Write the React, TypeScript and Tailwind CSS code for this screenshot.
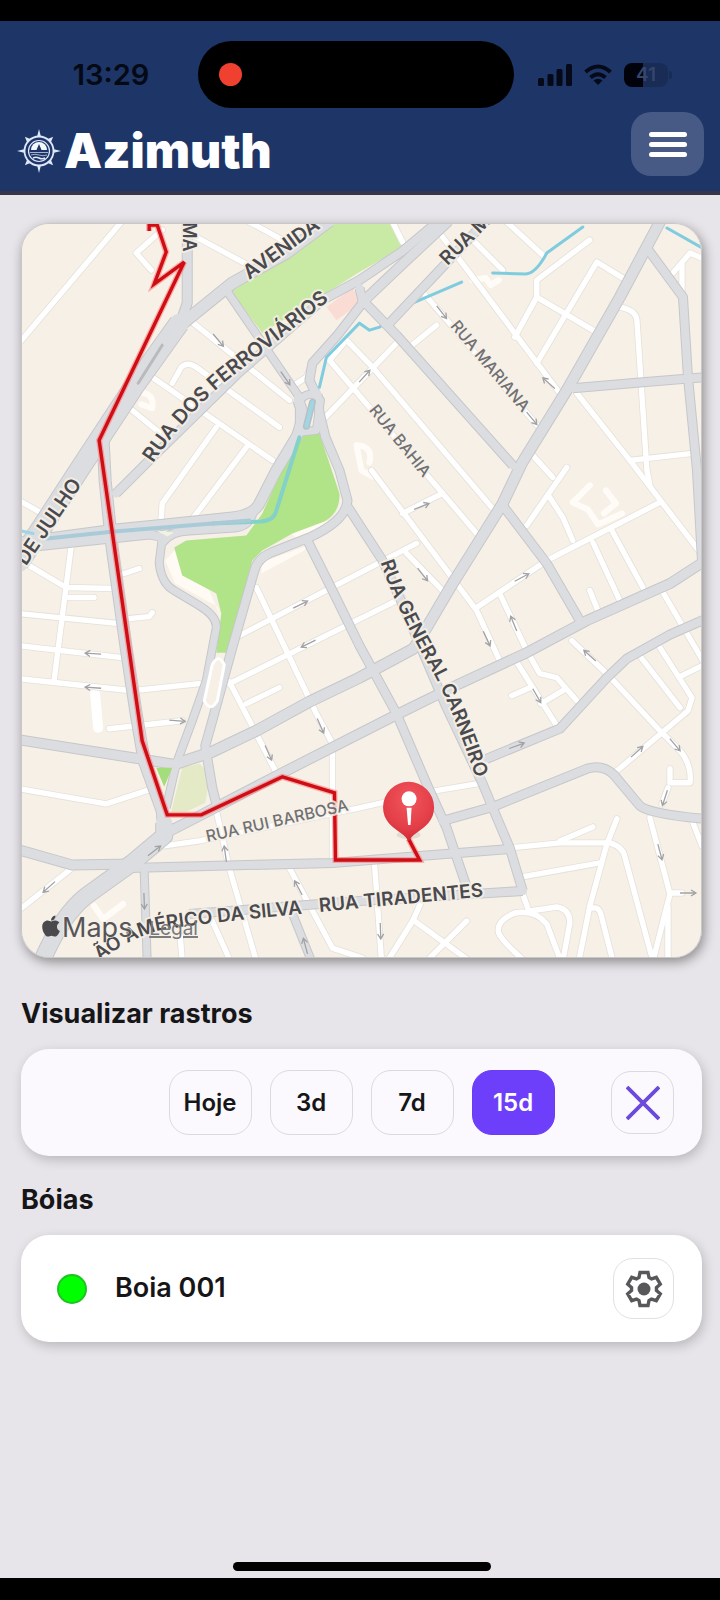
import React from "react";
import { FaApple } from "react-icons/fa";

const mainRoads: { d: string; w: number }[] = [
  { d: "M20 562L83 465L135 386L180 323", w: 19 },
  { d: "M180 326L233 283L287 253L330 221", w: 11 },
  { d: "M188 220L188 303L180 326", w: 9 },
  { d: "M227 290L300 397", w: 7 },
  { d: "M117 493L150 460L240 372L323 300L360 280L403 251L439 221", w: 8 },
  { d: "M363 302L403 264L449 221", w: 9 },
  { d: "M388 325L443 267L486 221", w: 8 },
  { d: "M360 288L363 300L397 335L513 465", w: 8 },
  { d: "M503 505L547 563L580 620", w: 8 },
  { d: "M661 220L620 297L567 390L522 463L503 503L453 583L427 627L414 648L360 677L310 701L257 730L213 751L177 763", w: 10 },
  { d: "M647 248L683 297L688 377L697 470L702 560", w: 8 },
  { d: "M573 388L643 382L704 377", w: 8 },
  { d: "M366 299L338 335L313 363L310 380L317 395", w: 8 },
  { d: "M299 400L304 415L298 435L277 470L259 505Q252 515 233 517L157 525L117 529L20 542", w: 10 },
  { d: "M318 394L320 412L326 437L340 470L348 500Q347 520 310 537L272 552Q258 558 255 570L233 647L213 720L206 745L213 787L217 803", w: 8 },
  { d: "M300 400Q312 388 321 400L317 430L300 432Z", w: 7 },
  { d: "M36 546L150 534L160 536M163 542Q172 530 190 530L235 527Q250 526 254 510", w: 8 },
  { d: "M163 538L160 562Q162 583 175 590L200 605Q218 616 217 627L207 680L193 720L177 763L167 807", w: 7 },
  { d: "M348 506L383 560L400 597L447 707L483 783L493 807L510 847L523 890", w: 8 },
  { d: "M308 540L333 590L360 645L397 713L427 783L447 827L467 886", w: 8 },
  { d: "M165 833L202 814L283 772L397 714L460 683L527 652L587 620L670 583L704 561", w: 9 },
  { d: "M704 619L670 634L627 658L607 677L560 728L487 758", w: 8 },
  { d: "M443 820L493 806L587 768Q603 763 614 774L640 805Q650 813 704 818", w: 8 },
  { d: "M130 867L333 862L420 855L510 848", w: 8 },
  { d: "M190 913L360 900L523 890", w: 8 },
  { d: "M104 440L106 480L113 547L127 647L137 713L145 760L163 810L165 833", w: 11 },
  { d: "M165 822L165 835L133 862L87 895Q62 915 43 960", w: 16 },
  { d: "M20 739L140 758L177 764", w: 9 },
  { d: "M20 849L73 864L133 863", w: 9 },
  { d: "M145 870L148 960", w: 7 },
  { d: "M290 905L312 960", w: 7 },
];

const streets = [
  "M20 343L123 221", "M163 230L137 253L152 270", "M197 237L247 264", "M250 222L287 242",
  "M193 322L290 400", "M153 377L273 460", "M173 383L182 367Q188 361 197 367L280 427",
  "M133 410L160 432", "M217 427L163 503L162 518", "M247 447L195 516", "M313 362L307 377L293 386",
  "M330 360L477 533", "M330 360L347 340L373 367L493 508", "M323 420L397 343", "M410 347L437 325",
  "M423 292L540 428", "M440 233L560 393", "M470 237L503 270", "M507 222L543 255",
  "M590 240L537 280L537 297L593 330", "M537 297L515 337", "M623 278L597 262L537 363",
  "M393 222L403 242", "M620 307Q636 310 637 320L647 470L650 485", "M577 393L630 460L704 557",
  "M630 460L693 453", "M673 273L690 253L704 259", "M682 265L682 293", "M533 455L553 477",
  "M567 467L527 525", "M550 497L563 517L573 540", "M660 502L547 560L477 607", "M593 542L620 600",
  "M612 530L643 587", "M590 590L598 610", "M662 590L704 662", "M372 470L457 583L477 610L500 660",
  "M403 513L443 493", "M240 635L417 543", "M230 683L403 597", "M407 553L443 590",
  "M500 593L527 650L540 673L557 677L577 700", "M518 663L557 725", "M512 695L530 687",
  "M541 703L563 690", "M572 640L607 673L660 730L680 750Q692 764 690 782L670 782L670 768",
  "M668 787L662 803", "M642 658L680 707", "M660 647L692 697L688 710L617 770", "M682 675L704 664",
  "M165 845L200 840L360 807L435 790L483 782", "M510 847L560 842L610 842Q623 846 625 856L653 960",
  "M560 840L593 826", "M617 818L607 843L590 905L579 960", "M522 876L600 862", "M523 893L528 907",
  "M561 960L547 923Q535 908 515 912Q496 920 499 932Q502 940 525 960",
  "M530 910L557 906Q570 908 570 922L563 960", "M593 907Q599 906 601 913L613 960",
  "M650 817L670 893L653 960", "M668 905L668 960", "M670 892L682 892", "M693 822L702 845",
  "M375 863L382 960", "M423 898L413 920L388 960", "M415 920L470 960", "M467 920L427 960",
  "M20 788L107 803L153 788", "M110 728L183 720", "M72 868L20 909", "M140 863L160 847",
  "M230 681L277 772", "M257 587L317 713L333 743L333 860", "M217 810L230 867L257 960",
  "M290 867L333 947L363 957", "M213 920L231 960", "M181 935L183 960", "M247 703L280 687",
  "M72 547L55 680", "M20 559L67 587L115 588", "M20 613L120 623", "M20 645L123 657",
  "M20 678L133 690L200 683", "M20 500L43 513", "M125 573L140 568", "M130 618L150 616L153 612",
  "M70 597L95 597",
];

const paleShapes =
  "M590 485L573 502L588 509L598 524L622 513M606 490L616 503L604 513M140 392Q156 393 153 408L142 404M473 280L486 278L491 285L499 280M357 445L362 470L373 476M357 445Q374 446 370 462M95 905L104 918L124 903";

const arrows: [number, number, number][] = [
  [219, 340, 50], [286, 378, 55], [442, 312, 52], [549, 383, 222], [532, 418, 50], [365, 376, -48],
  [422, 506, -22], [423, 574, 52], [522, 577, -28], [514, 623, 248], [487, 638, 65], [590, 655, 222],
  [537, 695, 60], [301, 604, -26], [309, 643, 154], [94, 653, 184], [94, 687, 184], [178, 720, 4],
  [269, 752, 66], [321, 725, 66], [517, 745, -20], [637, 751, -42], [675, 744, 50], [665, 797, 108],
  [660, 851, 75], [688, 892, 0], [381, 930, 88], [50, 886, 138], [155, 850, -38], [145, 900, 88],
  [226, 853, 262], [299, 887, 242], [306, 945, 255],
];

const labels: { id: string; d: string; text: string; size: number; bold?: boolean }[] = [
  { id: "ferro", d: "M154 463Q184 417 228 380L340 292", text: "RUA DOS FERROVIÁRIOS", size: 20, bold: true },
  { id: "avenida", d: "M250 280L350 207", text: "AVENIDA", size: 20, bold: true },
  { id: "ruam", d: "M448 266L528 186", text: "RUA M", size: 19, bold: true },
  { id: "ma", d: "M184 222L184 300", text: "MA", size: 18, bold: true },
  { id: "julho", d: "M27 566L94 468", text: "DE JULHO", size: 20, bold: true },
  { id: "mariana", d: "M450 326L548 443", text: "RUA MARIANA", size: 16 },
  { id: "bahia", d: "M369 410L448 508", text: "RUA BAHIA", size: 16 },
  { id: "carneiro", d: "M381 562Q398 612 434 673Q460 722 492 826", text: "RUA GENERAL CARNEIRO", size: 19, bold: true },
  { id: "rui", d: "M208 841L370 805", text: "RUA RUI BARBOSA", size: 16 },
  { id: "silva", d: "M101 960Q130 937 162 929Q186 924 320 911", text: "ÃO AMÉRICO DA SILVA", size: 19, bold: true },
  { id: "tira", d: "M320 911L510 893", text: "RUA TIRADENTES", size: 19, bold: true },
];

function MapView() {
  const route =
    "M150 231V225H158L167 252L155 284L185 262L100 440L143 740L168 814H202L283 776L335 792L336 859H420L409 838";
  return (
    <svg viewBox="23 224 678 732" className="block w-full" role="img" aria-label="Mapa com o rastro da boia">
      <defs>
        <radialGradient id="pin" cx="0.5" cy="0.3" r="0.75">
          <stop offset="0" stopColor="#f2555c" />
          <stop offset="0.65" stopColor="#e33e48" />
          <stop offset="1" stopColor="#c9252f" />
        </radialGradient>
        {labels.map((l) => (
          <path key={l.id} id={l.id} d={l.d} />
        ))}
      </defs>
      <rect x="20" y="220" width="690" height="740" fill="#f6f0e6" />
      <path d="M232 292L327 222H393L403 247L360 272L263 333Z" fill="#c8eaa5" />
      <path d="M327 307L353 288L362 302L337 320Z" fill="#fbdcd5" />
      <path d="M166 560L176 583L218 606L222 618L210 590L180 545ZM262 573L305 550L306 546L262 562ZM290 532L320 521L330 520L300 540Z" fill="#fffaf3" />
      <path d="M298 433H320L340 493Q341 512 325 521L293 533L263 550L253 560L228 652H217L222 613L217 593L183 575L175 547L187 540L247 535L263 513Z" fill="#b1e389" />
      <path d="M183 767L200 763Q210 770 209 785L206 802L187 811L172 811Z" fill="#e4e9c6" />
      <g fill="none" strokeLinecap="round" strokeLinejoin="round">
        <path d={paleShapes} stroke="#fffcf8" strokeWidth="6" />
        <path d="M96 693L99 727" stroke="#ffffff" strokeWidth="10" />
        <g stroke="#e5e1da" strokeWidth="7">
          {streets.map((d) => (
            <path key={d} d={d} />
          ))}
        </g>
        <g stroke="#ffffff" strokeWidth="5.4">
          {streets.map((d) => (
            <path key={d} d={d} />
          ))}
        </g>
        <path d="M583 227L547 253Q536 274 525 274L493 273M462 282L413 303L380 327L370 330L360 323L327 357L320 387M667 228L704 249" stroke="#7fcce0" strokeWidth="3" />
        <g stroke="#c6c7ca">
          {mainRoads.map((r) => (
            <path key={r.d} d={r.d} strokeWidth={r.w + 2} strokeLinecap="butt" />
          ))}
        </g>
        <g stroke="#dcdde1">
          {mainRoads.map((r) => (
            <path key={r.d} d={r.d} strokeWidth={r.w} />
          ))}
        </g>
        <path d="M213 664Q219 652 225 664L218 700Q211 712 205 700Z" fill="#f6f0e6" stroke="#ffffff" strokeWidth="3" />
        <path d="M157 530L175 532L168 536Z" fill="#f0f3df" />
        <path d="M313 402L307 426" stroke="#b9bfc4" strokeWidth="7" />
        <path d="M313 402L307 426" stroke="#9fd6e3" strokeWidth="4" />
        <path d="M300 437L277 510Q275 520 262 521L213 523" stroke="#83d1c9" strokeWidth="4" />
        <path d="M250 520L115 531L48 538" stroke="#a9cbd8" strokeWidth="4" />
        <path d="M20 530L34 533" stroke="#9fd6e3" strokeWidth="3" />
        <path d="M139 383L163 345" stroke="#b9babd" strokeWidth="3" />
      </g>
      <path d="M157 767H173L165 786Z" fill="#a4dd7c" />
      <g fill="none" stroke="#a2a2a5" strokeWidth="1.3">
        {arrows.map(([x, y, a]) => (
          <path key={`${x}-${y}`} d="M-8 0H8M3 -3L8 0L3 3" transform={`translate(${x} ${y}) rotate(${a})`} />
        ))}
      </g>
      <path d={route} fill="none" stroke="#ff6a6a" strokeOpacity="0.5" strokeWidth="6" />
      <path d={route} fill="none" stroke="#cf0d14" strokeWidth="3.4" />
      <g className="font-['Inter','Liberation_Sans',sans-serif]">
        {labels.map((l) => (
          <text
            key={l.id}
            fontSize={l.size}
            fontWeight={l.bold ? 600 : 500}
            fill={l.bold ? "#4a4a4e" : "#707074"}
            stroke="#f6f0e6"
            strokeOpacity="0.85"
            strokeWidth="4"
            strokeLinejoin="round"
            paintOrder="stroke"
          >
            <textPath href={`#${l.id}`}>{l.text}</textPath>
          </text>
        ))}
        <text x="150" y="934" fontSize="19" fill="#77777a" textDecoration="underline">Legal</text>
        <text x="63" y="936" fontSize="27" fill="#56565a" stroke="#f6f0e6" strokeOpacity="0.7" strokeWidth="2" paintOrder="stroke">Maps</text>
      </g>
      <FaApple x="40" y="913" size={24} color="#4a4a4c" />
      <ellipse cx="409" cy="834" rx="12" ry="4" fill="#000" opacity="0.08" />
      <path d="M409 781a25.5 25.5 0 0 1 25.5 25.5c0 13-9 20-17 25q-6 4-8.500 9q-2.500-5-8.500-9c-8-5-17-12-17-25A25.500 25.500 0 0 1 409 781Z" fill="url(#pin)" />
      <circle cx="409.500" cy="798" r="7.500" fill="#fff" />
      <path d="M407 807H412L411 824H408.500Z" fill="#fff" />
    </svg>
  );
}

function CompassLogo() {
  return (
    <svg viewBox="-22 -22 44 44" className="h-11 w-11" fill="none" stroke="#dfe8fb" aria-hidden="true">
      <circle r="14.500" strokeWidth="1.800" />
      <circle r="10.500" strokeWidth="1.200" />
      {[0, 90, 180, 270].map((a) => (
        <path key={a} d="M0 -22L2 -14H-2Z" fill="#dfe8fb" stroke="none" transform={`rotate(${a})`} />
      ))}
      {[45, 135, 225, 315].map((a) => (
        <path key={a} d="M0 -20L2.500 -14H-2.500Z" fill="#dfe8fb" stroke="none" transform={`rotate(${a})`} />
      ))}
      <path d="M-8 -1A8 8 0 0 1 8 -1Z" fill="#f4f8ff" stroke="none" />
      <path d="M0 -7L2.500 -1H-2.500Z" fill="#1d3567" stroke="none" />
      <path d="M-9 1.500H9M-8 4Q-4 2.500 0 4T8 4" strokeWidth="1" opacity="0.7" />
      <path d="M-6 7Q-3 5.500 0 7T6 7" strokeWidth="1.600" />
    </svg>
  );
}

function GearIcon() {
  const base: [number, number][] = [[-5, -11.5], [-4, -16.5], [4, -16.5], [5, -11.5]];
  const points = [0, 1, 2, 3, 4, 5]
    .flatMap((k) => {
      const t = (k * Math.PI) / 3;
      return base.map(([x, y]) => `${(x * Math.cos(t) - y * Math.sin(t)).toFixed(2)},${(x * Math.sin(t) + y * Math.cos(t)).toFixed(2)}`);
    })
    .join(" ");
  return (
    <svg viewBox="-19 -19 38 38" className="h-[38px] w-[38px]" aria-hidden="true">
      <polygon points={points} fill="none" stroke="#58585b" strokeWidth="3.400" strokeLinejoin="miter" />
      <circle r="6.500" fill="#58585b" />
    </svg>
  );
}

function StatusIcons() {
  return (
    <div className="flex items-center gap-3">
      <svg viewBox="0 0 34 22" className="h-[22px] w-[34px]" fill="#060a18" aria-hidden="true">
        <rect x="0" y="14" width="6" height="8" rx="1.500" />
        <rect x="9.500" y="10" width="6" height="12" rx="1.500" />
        <rect x="18.500" y="5" width="6" height="17" rx="1.500" />
        <rect x="28" y="0" width="6" height="22" rx="1.500" />
      </svg>
      <svg viewBox="0 0 28 21" className="h-[21px] w-7" fill="none" stroke="#060a18" strokeWidth="4" aria-hidden="true">
        <path d="M1.500 8Q14 -3 26.500 8" />
        <path d="M6.500 13.500Q14 7 21.500 13.500" />
        <path d="M14 21L9.500 16.500Q14 13 18.500 16.500Z" fill="#060a18" stroke="none" />
      </svg>
      <div className="flex items-center gap-px">
        <div className="flex h-6 w-11 items-center justify-center rounded-lg bg-linear-to-r from-[#02030a] from-43% to-[#182c55] to-43% text-[19px] leading-none font-semibold text-[#34466e]">
          41
        </div>
        <div className="h-2 w-[3px] rounded-r-sm bg-[#182c55]" />
      </div>
    </div>
  );
}

const periods = ["Hoje", "3d", "7d", "15d"];

export default function App() {
  const [period, setPeriod] = React.useState("15d");
  return (
    <div className="flex min-h-screen flex-col border-t-[21px] border-b-[22px] border-black bg-[#e7e5e9] font-['Inter','Liberation_Sans',sans-serif] text-[#161618]">
      <header className="border-b-4 border-[#35364a] bg-[#1d3567]">
        <div className="grid grid-cols-[1fr_316px_1fr] items-center pt-5 pr-2">
          <div className="pl-6 text-center text-[29px] leading-none font-semibold text-[#050914]">13:29</div>
          <div className="flex h-[67px] items-center rounded-full bg-black pl-[21px]">
            <span className="h-[23px] w-[23px] rounded-full bg-[#f04130]" />
          </div>
          <div className="flex justify-center pr-4">
            <StatusIcons />
          </div>
        </div>
        <div className="flex items-end justify-between pt-1 pr-4 pb-[15px] pl-[17px]">
          <div className="flex h-[50px] items-center gap-[3px]">
            <CompassLogo />
            <h1 className="text-[48px] leading-none font-black text-white">Azimuth</h1>
          </div>
          <button type="button" aria-label="Menu" className="flex h-16 w-[73px] flex-col items-center justify-center gap-[5px] rounded-[20px] bg-[#475a86]">
            <span className="h-[5px] w-[38px] rounded-full bg-white" />
            <span className="h-[5px] w-[38px] rounded-full bg-white" />
            <span className="h-[5px] w-[38px] rounded-full bg-white" />
          </button>
        </div>
      </header>

      <main className="flex flex-1 flex-col pt-7 pr-[18px] pl-[21px]">
        <section className="overflow-hidden rounded-[28px] border border-[#c9c7c8] shadow-[2px_4px_12px_rgba(0,0,0,0.4)]">
          <MapView />
        </section>

        <h2 className="mt-9 mb-[15px] text-[27px] leading-10 font-bold">Visualizar rastros</h2>
        <section className="grid h-[107px] grid-cols-[1fr_auto_1fr] items-center rounded-[28px] bg-[#fbf9fd] px-7 shadow-[2px_4px_12px_rgba(0,0,0,0.2)]">
          <div className="col-start-2 flex gap-[18px]">
            {periods.map((p) => (
              <button
                key={p}
                type="button"
                aria-pressed={p === period}
                onClick={() => setPeriod(p)}
                className={
                  p === period
                    ? "h-[65px] w-[83px] rounded-[20px] border border-[#6a3df5] bg-[#6e3ffa] text-[24px] font-semibold text-white"
                    : "h-[65px] w-[83px] rounded-[20px] border border-[#dcdadd] text-[24px] font-semibold"
                }
              >
                {p}
              </button>
            ))}
          </div>
          <button type="button" aria-label="Limpar rastro" className="flex h-[63px] w-[63px] items-center justify-center justify-self-end rounded-[20px] border border-[#dcdadd]">
            <svg viewBox="0 0 34 34" className="h-[34px] w-[34px]" stroke="#6b4add" strokeWidth="3.800" aria-hidden="true">
              <path d="M1 1L33 33M33 1L1 33" />
            </svg>
          </button>
        </section>

        <h2 className="mt-6 mb-[15px] text-[27px] leading-10 font-bold">Bóias</h2>
        <section className="flex h-[107px] items-center rounded-[28px] bg-white pr-7 pl-9 shadow-[2px_4px_12px_rgba(0,0,0,0.2)]">
          <span className="h-[30px] w-[30px] rounded-full border-2 border-[#1cc422] bg-[#00ff00]" />
          <span className="ml-7 flex-1 text-[27px] font-semibold">Boia 001</span>
          <button type="button" aria-label="Configurar Boia 001" className="flex h-[61px] w-[61px] items-center justify-center rounded-[20px] border border-[#e2e0e3]">
            <GearIcon />
          </button>
        </section>

        <div className="mt-auto mb-[7px] h-[9px] w-[258px] self-center rounded-full bg-black" />
      </main>
    </div>
  );
}
